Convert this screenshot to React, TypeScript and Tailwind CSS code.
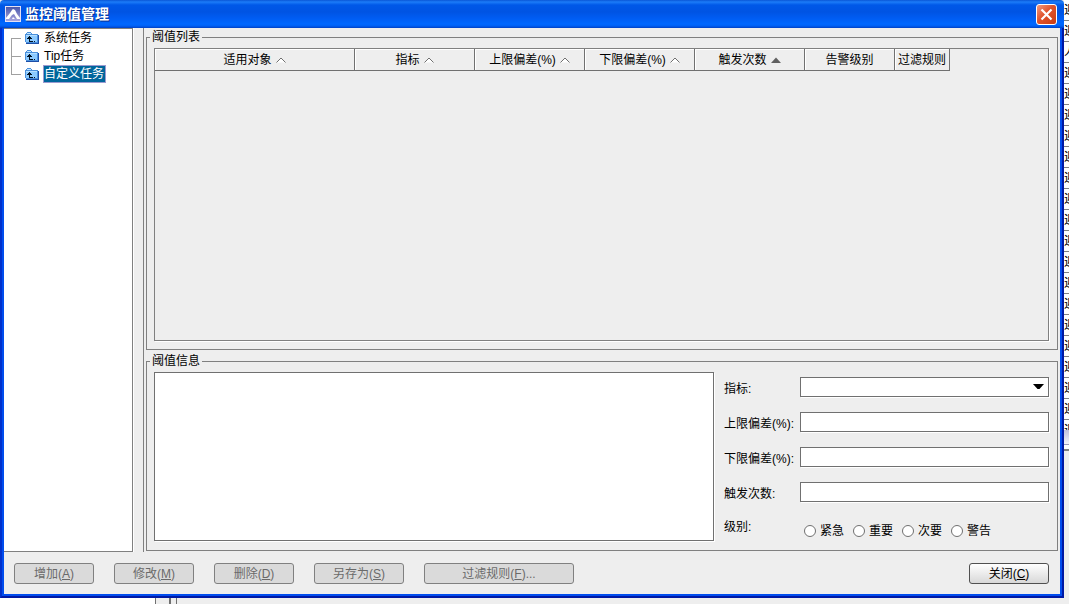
import React from 'react';
import clsx from 'clsx';

type SortState = 'none' | 'asc';

type Column = {
  title: string;
  width: string;
  sort?: SortState;
};

const columns: Column[] = [
  { title: '适用对象', width: 'w-[200px]', sort: 'none' },
  { title: '指标', width: 'w-[120px]', sort: 'none' },
  { title: '上限偏差(%)', width: 'w-[110px]', sort: 'none' },
  { title: '下限偏差(%)', width: 'w-[110px]', sort: 'none' },
  { title: '触发次数', width: 'w-[110px]', sort: 'asc' },
  { title: '告警级别', width: 'w-[90px]' },
  { title: '过滤规则', width: 'w-[55px]' },
];

const tasks = ['系统任务', 'Tip任务', '自定义任务'];

const actions = [
  { label: '增加', hotkey: 'A', width: 'w-20' },
  { label: '修改', hotkey: 'M', width: 'w-20' },
  { label: '删除', hotkey: 'D', width: 'w-20' },
  { label: '另存为', hotkey: 'S', width: 'w-[90px]' },
  { label: '过滤规则', hotkey: 'F', width: 'w-[150px]', suffix: '...' },
];

const textFields = [
  { id: 'upper', label: '上限偏差(%):' },
  { id: 'lower', label: '下限偏差(%):' },
  { id: 'count', label: '触发次数:' },
];

const levels = ['紧急', '重要', '次要', '警告'];

const backgroundRows = Array.from({ length: 21 }, (_, i) => (i === 2 ? '人' : '迎'));

const AppIcon = () => (
  <svg width="16" height="16" viewBox="0 0 16 16" aria-hidden="true">
    <defs>
      <linearGradient id="app-icon" x1="0" y1="0" x2="0" y2="1">
        <stop offset="0" stopColor="#4a58ac" />
        <stop offset="1" stopColor="#aaa6de" />
      </linearGradient>
    </defs>
    <rect width="16" height="16" fill="#e4e0f4" />
    <rect x="1" y="1" width="14" height="14" fill="url(#app-icon)" />
    <path d="M1 12L5 7L7 4L8 3L10 4L12 8L15 12V13H12L9 8L7 9L4 13H1Z" fill="#fff" />
    <path d="M7 13L8 11L10 13Z" fill="#fff" />
  </svg>
);

const FolderIcon = () => (
  <svg width="14" height="12" viewBox="0 0 14 12" shapeRendering="crispEdges" aria-hidden="true">
    <path d="M0 2H1V1H2V0H6V1H7V2H13V11H1V10H0Z" fill="#4a90dc" />
    <path d="M1 3H12V10H1Z" fill="#8ccaff" />
    <path d="M2 1H6V2H2Z" fill="#c4e6ff" />
    <path d="M1 3H12V4H1Z" fill="#b4deff" />
    <path d="M13 3H14V12H1V11H13Z" fill="#1c4fa8" />
    <path d="M4 4H5V5H6V6H7V7H5V9H8V10H4V7H2V6H3V5H4Z" fill="#001020" />
    <path d="M9 9H10V10H9Z" fill="#001020" />
  </svg>
);

const treeLines = {
  first: 'M0 9H10V10H1V18H0Z',
  middle: 'M0 0H1V9H10V10H1V18H0Z',
  last: 'M0 0H1V9H10V10H0Z',
};

const TreeLine = ({ kind }: { kind: keyof typeof treeLines }) => (
  <svg width="10" height="18" viewBox="0 0 10 18" shapeRendering="crispEdges" aria-hidden="true">
    <path d={treeLines[kind]} fill="#a0a0a0" />
  </svg>
);

const SortIcon = ({ sort }: { sort: SortState }) => (
  <svg width="10" height="6" viewBox="0 0 10 6" className="shrink-0" aria-hidden="true">
    {sort === 'asc' ? (
      <path d="M0 6L5 0.5L10 6Z" fill="#606060" />
    ) : (
      <path d="M0.5 5.5L5 1L9.5 5.5" fill="#fff" stroke="#707070" />
    )}
  </svg>
);

const TitleBar = () => (
  <header className="flex h-7 shrink-0 items-center rounded-t-sm bg-[linear-gradient(to_bottom,#0a56d6_0px,#1c7cf8_2px,#0058e8_5px,#0054e3_12px,#005cf2_18px,#0068ff_24px,#0060f4_26px,#0040c4_28px)] pl-[5px] pr-[7px]">
    <AppIcon />
    <h1 className="ml-1 flex-1 text-sm font-bold text-white [text-shadow:1px_1px_0_#0a2f8c]">
      监控阈值管理
    </h1>
    <button
      type="button"
      aria-label="关闭窗口"
      className="flex h-[21px] w-[21px] items-center justify-center rounded-[3px] border border-white bg-[linear-gradient(135deg,#f09a80,#e0532c_45%,#c83c14)]"
    >
      <svg width="13" height="13" viewBox="0 0 13 13" aria-hidden="true">
        <path d="M1.5 1.5L11.5 11.5M11.5 1.5L1.5 11.5" stroke="#fff" strokeWidth="2.2" />
      </svg>
    </button>
  </header>
);

const TaskTree = () => (
  <nav className="w-[129px] shrink-0 border-t border-r border-b border-[#808080] bg-white shadow-[1px_0_0_#fff]">
    <ul>
      {tasks.map((task, index) => {
        const last = index === tasks.length - 1;
        return (
          <li key={task} className="flex h-[18px] items-center pl-[7px]">
            <TreeLine kind={index === 0 ? 'first' : last ? 'last' : 'middle'} />
            <span className="mx-1">
              <FolderIcon />
            </span>
            <button
              type="button"
              className={clsx(
                'flex h-[18px] items-center whitespace-nowrap border pr-px',
                last ? 'border-[#9c9ad0] bg-[#00669c] text-white' : 'border-transparent'
              )}
            >
              {task}
            </button>
          </li>
        );
      })}
    </ul>
  </nav>
);

const ThresholdList = () => (
  <fieldset className="flex min-h-0 min-w-0 flex-1 flex-col border border-[#808080] px-[7px] pb-2">
    <legend className="-ml-1 px-0.5 leading-4">阈值列表</legend>
    <div className="mt-[3px] mr-px min-h-0 flex-1 overflow-hidden border border-[#808080] shadow-[1px_1px_0_#fff]">
      <table className="table-fixed border-separate border-spacing-0">
        <thead>
          <tr>
            {columns.map(({ title, width, sort }) => (
              <th
                key={title}
                className={clsx(
                  width,
                  'h-[22px] whitespace-nowrap border-r border-b border-[#707070] p-0 font-normal shadow-[inset_1px_1px_0_#fff]'
                )}
              >
                <span className="flex items-center justify-center gap-1">
                  {title}
                  {sort && <SortIcon sort={sort} />}
                </span>
              </th>
            ))}
          </tr>
        </thead>
      </table>
    </div>
  </fieldset>
);

const fieldClass =
  'h-5 min-w-0 flex-1 appearance-none border border-[#707070] bg-white px-1 shadow-[1px_1px_0_#fff] outline-none';

const ThresholdInfo = () => (
  <fieldset className="mt-[3px] flex h-[198px] min-w-0 shrink-0 border border-[#808080] px-[7px] pb-[3px]">
    <legend className="-ml-1 px-0.5 leading-4">阈值信息</legend>
    <textarea
      aria-label="阈值信息"
      className="mt-[3px] min-w-0 flex-1 resize-none border border-[#707070] bg-white p-1 shadow-[1px_1px_0_#fff] outline-none"
    />
    <div className="mt-2 mr-px ml-[10px] flex w-[325px] shrink-0 flex-col gap-[15px]">
      <div className="relative flex h-5">
        <label htmlFor="metric" className="w-[76px] pt-1 leading-4">
          指标:
        </label>
        <select id="metric" className={fieldClass} />
        <svg
          width="11"
          height="5"
          viewBox="0 0 11 5"
          className="pointer-events-none absolute top-[7px] right-[5px]"
          aria-hidden="true"
        >
          <path d="M0 0H11L6.5 5H4.5Z" fill="#000" />
        </svg>
      </div>
      {textFields.map(({ id, label }) => (
        <div key={id} className="flex h-5">
          <label htmlFor={id} className="w-[76px] whitespace-nowrap pt-1 leading-4">
            {label}
          </label>
          <input id={id} type="text" className={fieldClass} />
        </div>
      ))}
      <div role="radiogroup" aria-labelledby="level" className="flex h-6 pt-0.5">
        <span id="level" className="w-20 leading-4">
          级别:
        </span>
        <div className="flex items-center gap-[9px] pt-0.5">
          {levels.map((level) => (
            <label key={level} className="flex items-center gap-1">
              <input
                type="radio"
                name="level"
                className="h-3 w-3 appearance-none rounded-full border border-[#707070] bg-white checked:border-4"
              />
              {level}
            </label>
          ))}
        </div>
      </div>
    </div>
  </fieldset>
);

const ActionBar = () => (
  <footer className="flex shrink-0 items-start gap-5 pt-[11px] pr-[11px] pb-[10px] pl-[10px]">
    {actions.map(({ label, hotkey, width, suffix }) => (
      <button
        key={label}
        type="button"
        disabled
        className={clsx(
          width,
          'h-[21px] rounded-[3px] border border-[#808080] bg-[#dadada] leading-4 text-[#6a6a6a]'
        )}
      >
        {label}(<span className="underline">{hotkey}</span>){suffix}
      </button>
    ))}
    <button
      type="button"
      className="ml-auto h-[21px] w-20 rounded-[3px] border border-[#505050] bg-linear-to-b from-white to-[#d8d8d8] leading-4"
    >
      关闭(<span className="underline">C</span>)
    </button>
  </footer>
);

// Edge of the application window that sits behind the dialog
const BackgroundEdge = () => (
  <div className="flex w-[5px] shrink-0 flex-col overflow-hidden bg-[#eee]">
    <ul className="h-[430px] shrink-0 overflow-hidden bg-white">
      {backgroundRows.map((text, index) => (
        <li key={index} className="h-[21px] w-4 border-b border-[#808080] leading-5">
          {text}
        </li>
      ))}
    </ul>
    <div className="h-[15px] shrink-0 border-b border-[#9c9cb8] bg-linear-to-b from-[#c0c0dc] to-[#f4f4fa]" />
    <div className="h-[6px] shrink-0 border-b-2 border-[#808080] bg-white" />
  </div>
);

const BackgroundBottom = () => (
  <div className="flex h-[6px] shrink-0">
    <div className="w-[156px] border-r border-[#707070] bg-white" />
    <div className="w-[15px] border-r-2 border-[#707070]" />
    <div className="w-[6px] border-r border-[#707070]" />
  </div>
);

export default function App() {
  return (
    <div className="flex h-screen flex-col overflow-hidden bg-[#eee] font-['Liberation_Sans','Noto_Sans_CJK_SC',sans-serif] text-xs text-black">
      <div className="flex min-h-0 flex-1">
        <div className="flex min-w-0 flex-1 flex-col bg-[#eee]">
          <TitleBar />
          <div className="flex min-h-0 flex-1 flex-col border-x-2 border-b-2 border-r-[#0018a4] border-b-[#0018a4] border-l-[#0030cc]">
            <div className="flex min-h-0 flex-1 flex-col border-x-2 border-b-2 border-[#004cee]">
              <div className="flex min-h-0 flex-1">
                <TaskTree />
                <main className="ml-[10px] flex min-w-0 flex-1 flex-col border-l border-[#808080] pt-px pr-[2px] pb-px pl-[2px]">
                  <ThresholdList />
                  <ThresholdInfo />
                </main>
              </div>
              <ActionBar />
            </div>
          </div>
        </div>
        <BackgroundEdge />
      </div>
      <BackgroundBottom />
    </div>
  );
}
